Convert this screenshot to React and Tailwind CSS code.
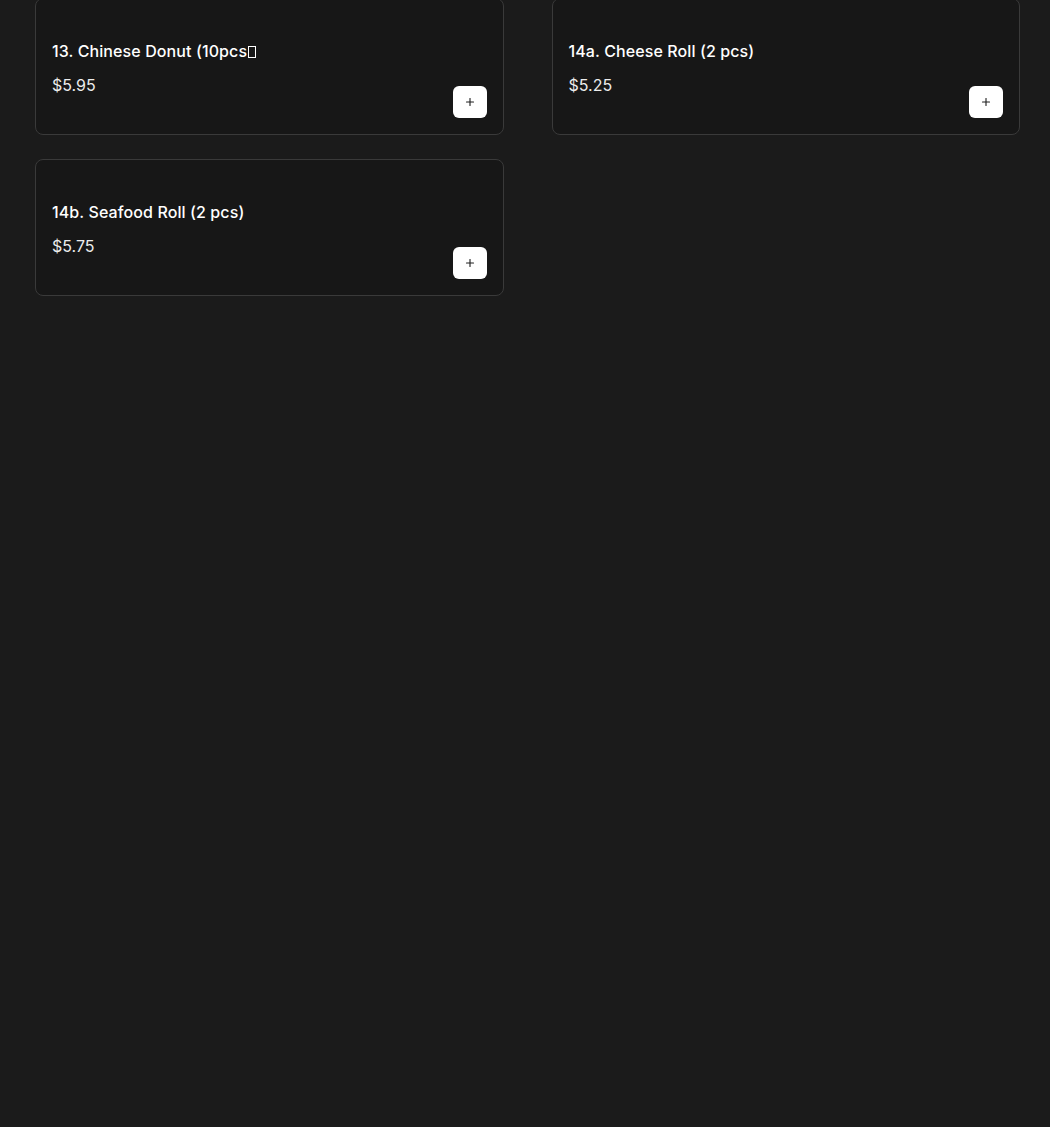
import { Plus } from 'lucide-react';

const ITEMS = [
  { id: '13', name: '13. Chinese Donut (10pcs', tofu: true, price: 5.95 },
  { id: '14a', name: '14a. Cheese Roll (2 pcs)', price: 5.25 },
  { id: '14b', name: '14b. Seafood Roll (2 pcs)', price: 5.75 },
];

function ItemCard({ item }) {
  return (
    <div className="bg-[#171717] border border-[#3a3a3a] rounded-lg p-4 flex flex-col">
      <div className="h-6" />
      <div className="flex items-end justify-between">
        <div className="pb-[21px]">
          <p className="text-base font-medium text-white leading-6 tracking-[0.1px]">
            {item.name}
            {item.tofu && <span className="inline-block w-[8px] h-[12px] border-[1.5px] border-white ml-[1px] align-[-1px]" />}
          </p>
          <p className="text-base text-[#ececec] leading-6 mt-[10px]">${item.price.toFixed(2)}</p>
        </div>
        <button className="w-[34px] h-[32px] rounded-md bg-white flex items-center justify-center text-[#1f1f1f]">
          <Plus size={12} strokeWidth={2.25} />
        </button>
      </div>
    </div>
  );
}

export default function App() {
  return (
    <div className="min-h-[1129px] bg-[#1b1b1b] font-['Inter',sans-serif]">
      <div className="grid grid-cols-2 gap-x-12 gap-y-6 pl-[35px] pr-[30px] -mt-[2px]">
        {ITEMS.map(item => <ItemCard key={item.id} item={item} />)}
      </div>
    </div>
  );
}
